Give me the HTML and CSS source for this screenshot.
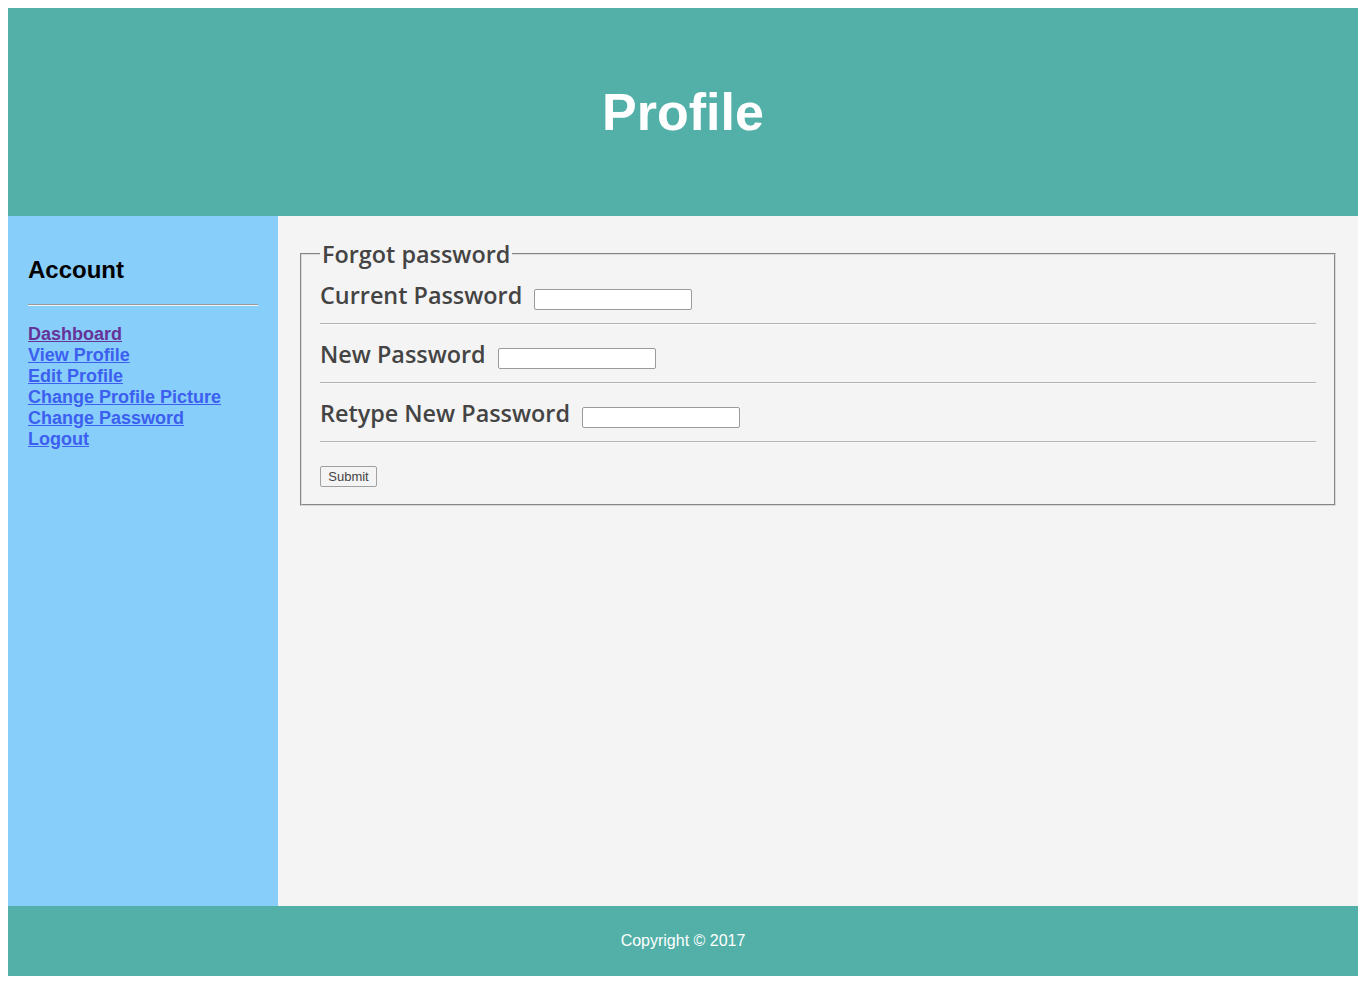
FILE: index.html
```html
<!DOCTYPE html>
<html lang="en">
<head>
<meta charset="utf-8">
<title>Profile</title>
<link rel="stylesheet" href="styles.css">
</head>
<body>
<div class="page">
  <header class="top">
    <h1 class="title">Profile</h1>
  </header>
  <div class="middle">
    <aside class="side">
      <h2 class="side-title">Account</h2>
      <hr class="side-rule">
      <nav class="side-links">
        <a class="link visited" href="#">Dashboard</a>
        <a class="link" href="#">View Profile</a>
        <a class="link" href="#">Edit Profile</a>
        <a class="link" href="#">Change Profile Picture</a>
        <a class="link" href="#">Change Password</a>
        <a class="link" href="#">Logout</a>
      </nav>
    </aside>
    <main class="content">
      <form class="form">
        <fieldset class="box">
          <legend class="legend">Forgot password</legend>
          <div class="row">
            <label class="label">Current Password</label>
            <input class="field" type="password">
          </div>
          <hr class="rule">
          <div class="row">
            <label class="label">New Password</label>
            <input class="field" type="password">
          </div>
          <hr class="rule">
          <div class="row">
            <label class="label">Retype New Password</label>
            <input class="field" type="password">
          </div>
          <hr class="rule">
          <button class="submit" type="button">Submit</button>
        </fieldset>
      </form>
    </main>
  </div>
  <footer class="bottom">Copyright © 2017</footer>
</div>
</body>
</html>
```

FILE: styles.css
```css
html, body {
  background: #ffffff;
}
body {
  margin: 8px;
  font-family: "Liberation Sans", Arial, sans-serif;
}
.page {
  display: flex;
  flex-direction: column;
}
.top {
  height: 208px;
  background: #52b0a8;
  display: flex;
  align-items: center;
  justify-content: center;
}
.title {
  margin: 0;
  color: #ffffff;
  font-size: 52px;
  font-weight: bold;
  line-height: 1;
}
.middle {
  display: flex;
  height: 690px;
}
.side {
  width: 230px;
  padding: 20px 20px;
  background: #87cefa;
  flex: none;
}
.side-title {
  margin: 20px 0 20px;
  font-size: 24px;
  font-weight: bold;
  color: #000000;
}
.side-rule {
  margin: 0;
  border: none;
  border-top: 1px solid #9a9a9a;
  border-bottom: 1px solid #eef6fc;
  height: 0;
}
.side-links {
  display: flex;
  flex-direction: column;
  margin-top: 18px;
}
.link {
  font-size: 18px;
  font-weight: bold;
  line-height: 21px;
  color: #3c5ff0;
  text-decoration: underline;
  align-self: flex-start;
}
.link.visited {
  color: #663399;
}
.content {
  flex: 1;
  background: #f4f4f4;
  padding: 20px 20px;
}
.form {
  margin: 0;
}
.box {
  margin: 0 2px;
  padding: 2px 18px 17px;
  border: 2px groove #dadada;
  font-family: "Comic Sans MS", "Open Sans", sans-serif;
  color: #444444;
}
.legend {
  padding: 0 2px;
  font-size: 23.4px;
  font-weight: 600;
  line-height: 36px;
  color: #444444;
}
.row {
  display: flex;
  align-items: center;
  height: 41px;
}
.label {
  font-size: 23.4px;
  font-weight: 600;
  color: #444444;
  margin-right: 12px;
}
.field {
  box-sizing: border-box;
  width: 158px;
  height: 21px;
  margin: 10px 0 0;
  padding: 0 3px;
  border: 1px solid #9a9a9a;
  border-radius: 2px;
  background: #ffffff;
}
.rule {
  margin: 8px 0;
  border: none;
  border-top: 1px solid #b4b4b4;
  border-bottom: 1px solid #f8f8f8;
  height: 0;
}
.submit {
  margin-top: 15px;
  box-sizing: border-box;
  width: 57px;
  height: 21px;
  padding: 0;
  font-family: "Liberation Sans", Arial, sans-serif;
  font-size: 13px;
  color: #444444;
  background: #f4f4f4;
  border: 1px solid #a0a0a0;
  border-radius: 2px;
}
.bottom {
  height: 70px;
  background: #52b0a8;
  color: #ffffff;
  font-size: 16px;
  display: flex;
  align-items: center;
  justify-content: center;
}
```
